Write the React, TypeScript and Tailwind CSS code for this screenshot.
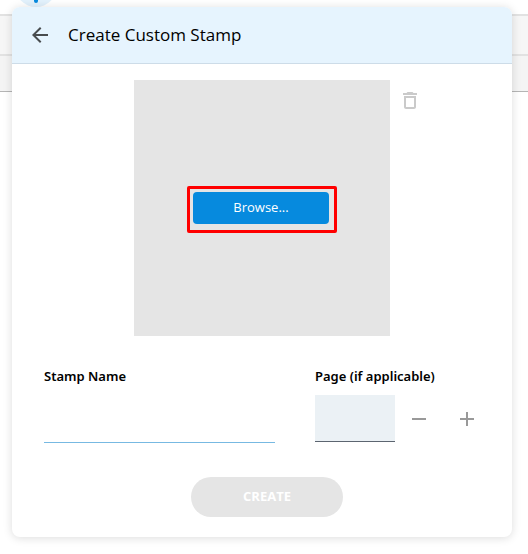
import React from 'react';

const Backdrop = (): React.ReactElement => {
  return (
    <div className="col-start-1 row-start-1">
      <div className="flex h-[14px] items-start overflow-hidden bg-white pl-[15px]">
        <div className="-mt-[35px] flex size-[42px] shrink-0 items-end justify-center rounded-full bg-[#e2f1fc] pb-1">
          <span className="h-4 w-1 rounded-b-sm bg-[#068ade]" />
        </div>
      </div>
      <div className="h-[40px] border-t-2 border-[#e2e2e2] bg-[#f6f6f6]" />
      <div className="h-[38px] border-t-2 border-b border-t-[#e2e2e2] border-b-[#b5b5b5] bg-[#f4f4f4]" />
    </div>
  );
};

const ArrowIcon = (): React.ReactElement => {
  return (
    <svg className="size-6" viewBox="0 0 24 24" fill="#484c4f">
      <path d="M20 11H7.83l5.59-5.59L12 4l-8 8 8 8 1.41-1.41L7.83 13H20v-2z" />
    </svg>
  );
};

const TrashIcon = (): React.ReactElement => {
  return (
    <svg className="size-6" viewBox="0 0 24 24" fill="#cacaca">
      <path d="M6 19c0 1.1.9 2 2 2h8c1.1 0 2-.9 2-2V8H6v11zM8 10h8v9H8v-9zm7.5-5l-1-1h-5l-1 1H5v2h14V5h-3.5z" />
    </svg>
  );
};

const Preview = (): React.ReactElement => {
  return (
    <div className="grid grid-cols-[1fr_auto_1fr] items-start">
      <div className="col-start-2 flex size-64 items-start justify-center bg-[#e5e5e5] pt-[106px]">
        <div className="rounded-xs border-3 border-[#ff0000] pt-[3px] pr-[5px] pb-[6px] pl-[3px]">
          <button
            type="button"
            className="flex h-8 w-[136px] items-center justify-center rounded bg-[#068ade] font-['Open_Sans','Noto_Sans',sans-serif] text-[13px] text-white"
          >
            Browse...
          </button>
        </div>
      </div>
      <button type="button" aria-label="Delete" className="mt-2 ml-2 w-6">
        <TrashIcon />
      </button>
    </div>
  );
};

const Fields = (): React.ReactElement => {
  return (
    <div className="mt-[30px] flex gap-10 pr-5 pl-8 text-[13px] leading-5 font-semibold">
      <div className="flex min-w-0 flex-1 flex-col">
        <label htmlFor="stamp-name">Stamp Name</label>
        <input
          id="stamp-name"
          type="text"
          className="mt-[9px] h-12 border-b border-[#77b9e2] font-normal outline-none"
        />
      </div>
      <div className="w-[177px]">
        <label htmlFor="page" className="block">
          Page (if applicable)
        </label>
        <div className="mt-[9px] flex">
          <input
            id="page"
            type="text"
            className="h-[47px] w-20 border-b border-[#5c6570] bg-[#ebf1f5] px-2 font-normal outline-none"
          />
          <button
            type="button"
            aria-label="Previous page"
            className="flex size-12 items-center justify-center"
          >
            <svg className="size-6" viewBox="0 0 24 24" fill="#999999">
              <path d="M19 13H5v-2h14v2z" />
            </svg>
          </button>
          <button
            type="button"
            aria-label="Next page"
            className="flex size-12 items-center justify-center"
          >
            <svg className="size-6" viewBox="0 0 24 24" fill="#999999">
              <path d="M19 13h-6v6h-2v-6H5v-2h6V5h2v6h6v2z" />
            </svg>
          </button>
        </div>
      </div>
    </div>
  );
};

const App = (): React.ReactElement => {
  return (
    <div className="grid min-h-screen items-start bg-white font-['Noto_Sans','Open_Sans',sans-serif] text-black">
      <Backdrop />
      <section
        role="dialog"
        aria-labelledby="dialog-title"
        className="z-10 col-start-1 row-start-1 mt-[7px] mr-4 mb-4 ml-3 overflow-hidden rounded-lg bg-white pb-5 shadow-[0_1px_10px_rgba(0,0,0,0.14)]"
      >
        <header className="flex h-[57px] items-center gap-4 border-b border-[#cddce8] bg-[#e6f4fe] px-4">
          <button type="button" aria-label="Back">
            <ArrowIcon />
          </button>
          <h1
            id="dialog-title"
            className="font-['Open_Sans','Noto_Sans',sans-serif] text-[17px] leading-6"
          >
            Create Custom Stamp
          </h1>
        </header>
        <div className="pt-4">
          <Preview />
          <Fields />
        </div>
        <footer className="mt-[34px] flex justify-center pl-[10px]">
          <button
            type="button"
            disabled
            className="h-10 w-[152px] rounded-full bg-[#e5e5e5] font-['Open_Sans','Noto_Sans',sans-serif] text-[13px] font-bold text-white"
          >
            CREATE
          </button>
        </footer>
      </section>
    </div>
  );
};

export default App;
